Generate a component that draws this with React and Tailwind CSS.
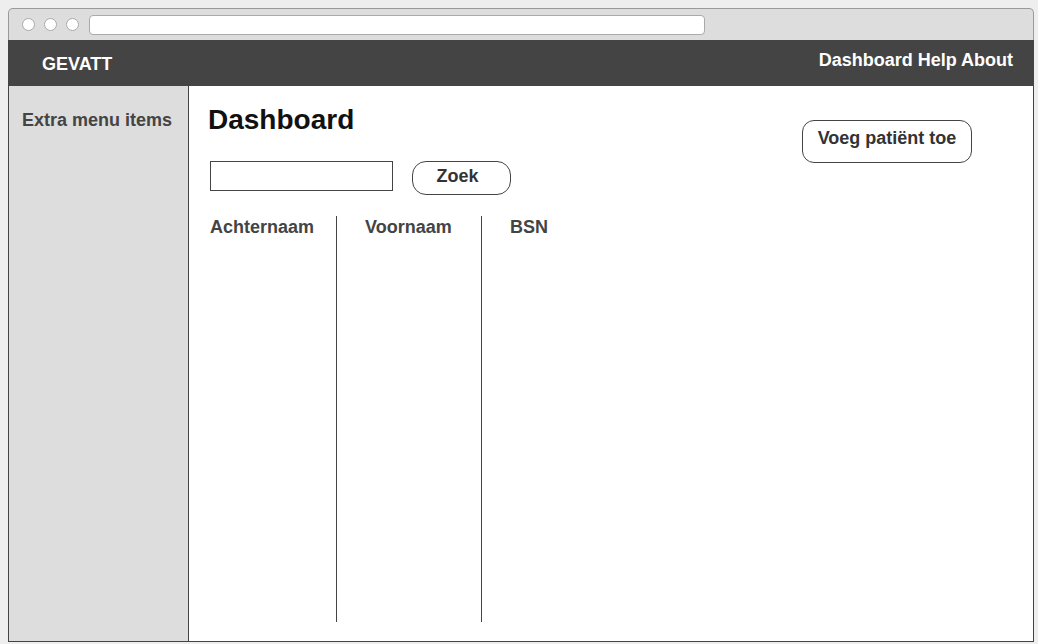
export default function App() {
  return (
    <div className="w-[1038px] h-[644px] bg-[#eeeeee] pt-[8px] pl-[8px] font-['Liberation_Sans',Arial,sans-serif] overflow-hidden">
      <div className="w-[1026px] h-[634px] flex flex-col">
        {/* title bar */}
        <div className="h-[32px] bg-[#dddddd] border border-b-0 border-[#9a9a9a] rounded-t-[5px] flex items-center pl-[13px] gap-[9px]">
          <span className="w-[13px] h-[13px] rounded-full bg-white border border-[#aaaaaa]" />
          <span className="w-[13px] h-[13px] rounded-full bg-white border border-[#aaaaaa]" />
          <span className="w-[13px] h-[13px] rounded-full bg-white border border-[#aaaaaa]" />
          <span className="ml-[1px] w-[616px] h-[20px] rounded-[4px] bg-white border border-[#aaaaaa]" />
        </div>
        {/* nav */}
        <div className="h-[46px] bg-[#444444] flex items-start justify-between text-white font-bold text-[18px]">
          <span className="pl-[34px] pt-[11px]">GEVATT</span>
          <span className="pr-[21px] pt-[7px]">Dashboard Help About</span>
        </div>
        {/* body */}
        <div className="flex-1 flex border-l border-r border-b border-[#444444] bg-white">
          <div className="w-[180px] bg-[#dddddd] border-r border-[#444444] pl-[13px] pt-[21px]">
            <span className="text-[18px] font-bold text-[#444444]">Extra menu items</span>
          </div>
          <div className="flex-1 pl-[19px] pt-[17px] flex flex-col">
            <div className="flex items-start">
              <h1 className="text-[28px] font-bold text-[#111111] leading-[34px]">Dashboard</h1>
              <button className="ml-auto mr-[61px] mt-[17px] w-[170px] h-[43px] rounded-[12px] border border-[#444444] bg-white text-[18px] font-bold text-[#333333] flex justify-center pt-[4px]">
                Voeg patiënt toe
              </button>
            </div>
            <div className="flex items-start gap-[19px] -mt-[2px] pl-[2px]">
              <div className="w-[183px] h-[30px] border border-[#444444] bg-white" />
              <button className="w-[99px] h-[34px] rounded-[14px] border border-[#444444] bg-white text-[18px] font-bold text-[#333333] flex justify-center pt-[1px] pr-[8px]">
                Zoek
              </button>
            </div>
            <div className="mt-[21px] flex h-[406px] pl-[2px]">
              <div className="w-[127px] border-r border-[#444444] text-[18px] leading-[23px] font-bold text-[#444444]">Achternaam</div>
              <div className="w-[145px] border-r border-[#444444] text-[18px] leading-[23px] font-bold text-[#444444] pl-[28px]">Voornaam</div>
              <div className="text-[18px] leading-[23px] font-bold text-[#444444] pl-[28px]">BSN</div>
            </div>
          </div>
        </div>
      </div>
    </div>
  );
}
